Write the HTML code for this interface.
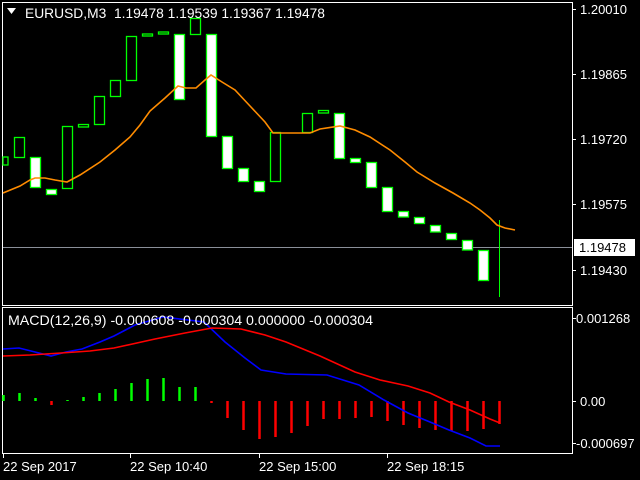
<!DOCTYPE html>
<html><head><meta charset="utf-8"><style>
html,body{margin:0;padding:0;background:#000;width:640px;height:480px;overflow:hidden}
svg{display:block}
text{font-family:"Liberation Sans","DejaVu Sans",sans-serif;font-size:13px;fill:#fff}
.big{font-size:14px}
</style></head><body>
<svg width="640" height="480" viewBox="0 0 640 480" xmlns="http://www.w3.org/2000/svg">
<rect width="640" height="480" fill="#000"/>
<rect x="2.5" y="2.5" width="570" height="303" fill="none" stroke="#fff" stroke-width="1"/>
<rect x="2.5" y="307.5" width="570" height="146" fill="none" stroke="#fff" stroke-width="1"/>
<line x1="3" y1="247.5" x2="572" y2="247.5" stroke="#8a8f99" stroke-width="1"/>
<line x1="499.5" y1="220" x2="499.5" y2="297" stroke="#00ff00" stroke-width="1"/>
<g stroke="#00ff00" stroke-width="1.3">
<rect x="3" y="157" width="5" height="8" fill="none"/>
<rect x="14.5" y="137.5" width="10" height="20" fill="none"/>
<rect x="30.5" y="157.5" width="10" height="30" fill="#fff"/>
<rect x="46.5" y="189.5" width="10" height="5" fill="#fff"/>
<rect x="62.5" y="126.5" width="10" height="62" fill="none"/>
<rect x="78.5" y="124.5" width="10" height="2.5" fill="none"/>
<rect x="94.5" y="96.5" width="10" height="28" fill="none"/>
<rect x="110.5" y="80.5" width="10" height="16" fill="none"/>
<rect x="126.5" y="36.5" width="10" height="44" fill="none"/>
<rect x="142.5" y="34" width="10" height="2" fill="none"/>
<rect x="158.5" y="32" width="10" height="2" fill="none"/>
<rect x="174.5" y="34.5" width="10" height="65" fill="#fff"/>
<rect x="190.5" y="18.5" width="10" height="16" fill="none"/>
<rect x="206.5" y="34.5" width="10" height="102" fill="#fff"/>
<rect x="222.5" y="136.5" width="10" height="32" fill="#fff"/>
<rect x="238.5" y="168.5" width="10" height="13" fill="#fff"/>
<rect x="254.5" y="181.5" width="10" height="10" fill="#fff"/>
<rect x="270.5" y="132.5" width="10" height="49" fill="none"/>
<rect x="302.5" y="113.5" width="10" height="19" fill="none"/>
<rect x="318.5" y="110.5" width="10" height="2.5" fill="none"/>
<rect x="334.5" y="113.5" width="10" height="45" fill="#fff"/>
<rect x="350.5" y="158.5" width="10" height="4" fill="#fff"/>
<rect x="366.5" y="162.5" width="10" height="25" fill="#fff"/>
<rect x="382.5" y="187.5" width="10" height="24" fill="#fff"/>
<rect x="398.5" y="211.5" width="10" height="5.5" fill="#fff"/>
<rect x="414.5" y="217.5" width="10" height="6" fill="#fff"/>
<rect x="430.5" y="225.5" width="10" height="6.5" fill="#fff"/>
<rect x="446.5" y="233.5" width="10" height="6" fill="#fff"/>
<rect x="462.5" y="240.5" width="10" height="9.5" fill="#fff"/>
<rect x="478.5" y="250.5" width="10" height="30" fill="#fff"/>
</g>
<polyline fill="none" stroke="#ff8c00" stroke-width="1.6" points="3,193 20,186 30,180 35,178 45,178 55,180 67,182 80,175 100,162 115,150 130,137 140,125 150,111 165,98 178,86 186,88 196,88 205,80 211,75 222,82 235,90 250,106 265,122 273,133 285,133 310,133 320,129 340,126 355,130 370,137 390,150 405,162 417,172 435,183 453,193 470,203 480,210 490,218 497,225 505,228 515,230"/>
<g stroke="#fff" stroke-width="1">
<line x1="572.5" y1="2" x2="572.5" y2="306"/>
<line x1="573" y1="9.5" x2="576" y2="9.5"/>
<line x1="573" y1="74.5" x2="576" y2="74.5"/>
<line x1="573" y1="139.5" x2="576" y2="139.5"/>
<line x1="573" y1="204.5" x2="576" y2="204.5"/>
<line x1="573" y1="270.5" x2="576" y2="270.5"/>
<line x1="572.5" y1="307" x2="572.5" y2="454"/>
<line x1="573" y1="318.5" x2="576" y2="318.5"/>
<line x1="573" y1="401.5" x2="576" y2="401.5"/>
<line x1="573" y1="443.5" x2="576" y2="443.5"/>
<line x1="3.5" y1="454" x2="3.5" y2="458"/>
<line x1="130.5" y1="454" x2="130.5" y2="458"/>
<line x1="259.5" y1="454" x2="259.5" y2="458"/>
<line x1="387.5" y1="454" x2="387.5" y2="458"/>
</g>
<text x="580" y="14">1.20010</text>
<text x="580" y="79">1.19865</text>
<text x="580" y="144">1.19720</text>
<text x="580" y="209">1.19575</text>
<rect x="574" y="239" width="61" height="17" fill="#fff"/>
<text x="579" y="252" style="fill:#000">1.19478</text>
<text x="580" y="275">1.19430</text>
<polygon points="7,8 16,8 11.5,14" fill="#fff"/>
<text class="big" x="25" y="18" textLength="300" lengthAdjust="spacingAndGlyphs">EURUSD,M3&#160;&#160;1.19478 1.19539 1.19367 1.19478</text>
<g stroke="#00ff00" stroke-width="2.5">
<line x1="3.5" y1="395" x2="3.5" y2="401"/>
<line x1="19.5" y1="393" x2="19.5" y2="401"/>
<line x1="35.5" y1="398" x2="35.5" y2="401"/>
<line x1="67.5" y1="400" x2="67.5" y2="401"/>
<line x1="83.5" y1="397" x2="83.5" y2="401"/>
<line x1="99.5" y1="393" x2="99.5" y2="401"/>
<line x1="115.5" y1="389" x2="115.5" y2="401"/>
<line x1="131.5" y1="383" x2="131.5" y2="401"/>
<line x1="147.5" y1="379" x2="147.5" y2="401"/>
<line x1="163.5" y1="378" x2="163.5" y2="401"/>
<line x1="179.5" y1="387" x2="179.5" y2="401"/>
<line x1="195.5" y1="387" x2="195.5" y2="401"/>
</g>
<g stroke="#ff0000" stroke-width="2.5">
<line x1="51.5" y1="401" x2="51.5" y2="405"/>
<line x1="211.5" y1="401" x2="211.5" y2="403"/>
<line x1="227.5" y1="401" x2="227.5" y2="418"/>
<line x1="243.5" y1="401" x2="243.5" y2="430"/>
<line x1="259.5" y1="401" x2="259.5" y2="439"/>
<line x1="275.5" y1="401" x2="275.5" y2="437"/>
<line x1="291.5" y1="401" x2="291.5" y2="433"/>
<line x1="307.5" y1="401" x2="307.5" y2="426"/>
<line x1="323.5" y1="401" x2="323.5" y2="419"/>
<line x1="339.5" y1="401" x2="339.5" y2="419"/>
<line x1="355.5" y1="401" x2="355.5" y2="418"/>
<line x1="371.5" y1="401" x2="371.5" y2="417"/>
<line x1="387.5" y1="401" x2="387.5" y2="421"/>
<line x1="403.5" y1="401" x2="403.5" y2="425"/>
<line x1="419.5" y1="401" x2="419.5" y2="428"/>
<line x1="435.5" y1="401" x2="435.5" y2="430"/>
<line x1="451.5" y1="401" x2="451.5" y2="431"/>
<line x1="467.5" y1="401" x2="467.5" y2="431"/>
<line x1="483.5" y1="401" x2="483.5" y2="429"/>
<line x1="499.5" y1="401" x2="499.5" y2="424"/>
</g>
<polyline fill="none" stroke="#0000ff" stroke-width="1.6" points="3,349 19,348 35,352 51,356 66,352 82,349 100,342 114,336 135,325 163,317 204,322 225,342 245,358 261,370 286,374 327,375 359,385 384,400 408,413 430,422 449,430 470,438 486,446 500,446"/>
<polyline fill="none" stroke="#ff0000" stroke-width="1.6" points="3,356 30,355 61,353 90,351 114,348 155,339 185,333 212,328 241,329 265,335 286,342 320,356 355,372 380,380 408,386 430,393 449,402 470,410 490,419 500,423"/>
<text class="big" x="8" y="325" textLength="365" lengthAdjust="spacingAndGlyphs">MACD(12,26,9) -0.000608 -0.000304 0.000000 -0.000304</text>
<text x="576" y="323">0.001268</text>
<text x="580" y="406">0.00</text>
<text x="576" y="448">-0.000697</text>
<text x="3" y="471">22 Sep 2017</text>
<text x="130" y="471">22 Sep 10:40</text>
<text x="259" y="471">22 Sep 15:00</text>
<text x="387" y="471">22 Sep 18:15</text>
</svg>
</body></html>
